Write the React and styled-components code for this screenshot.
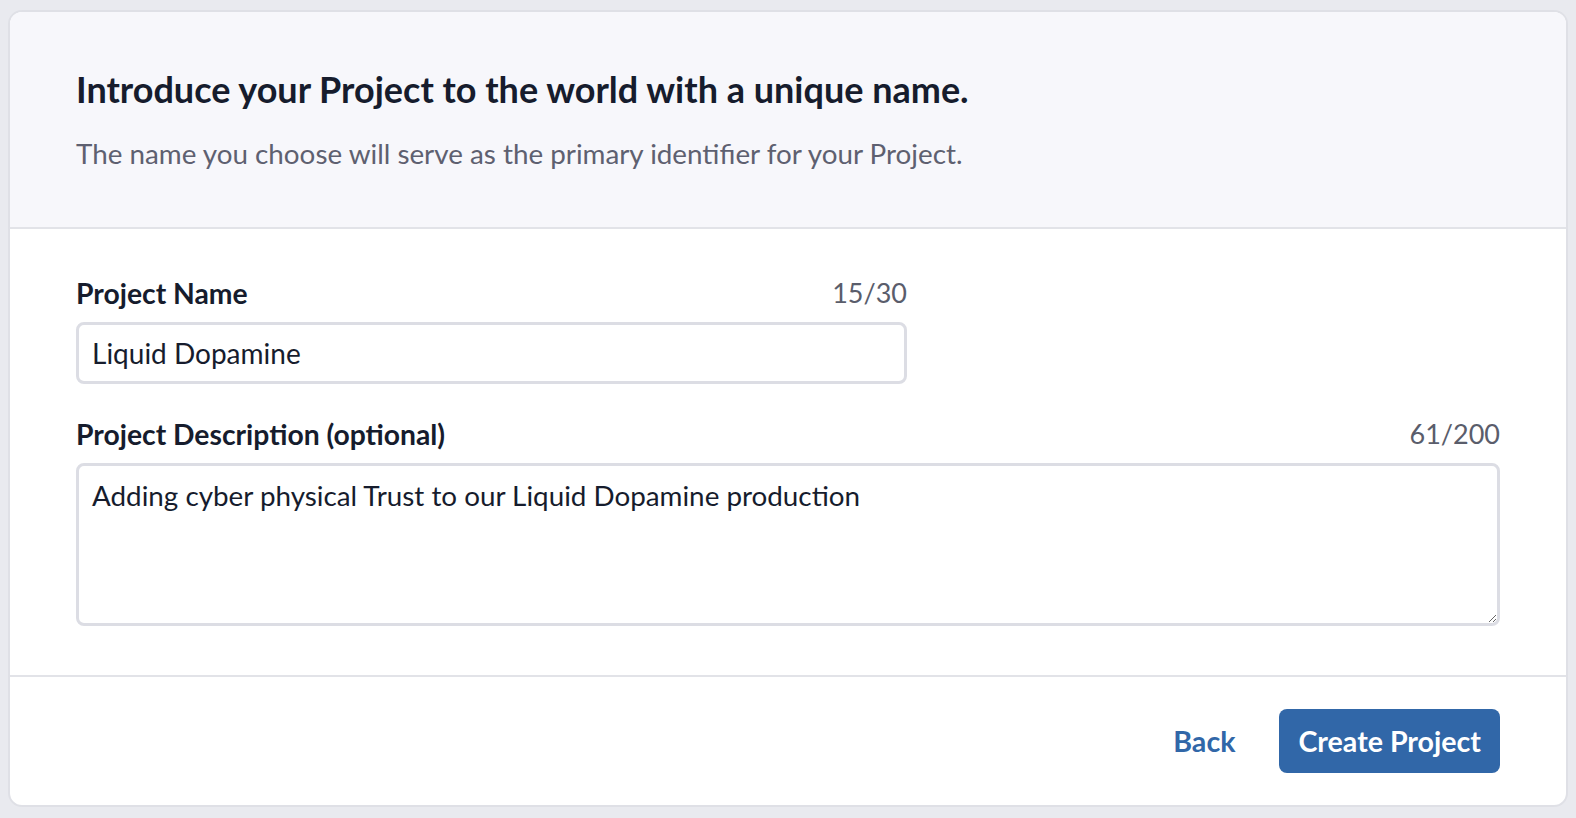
import React, { useState } from 'react';
import styled, { createGlobalStyle } from 'styled-components';

const GlobalStyle = createGlobalStyle`
  html, body {
    margin: 0;
    background: #e9eaef;
  }
  body {
    padding: 10px 8px 10px 8px;
    font-family: Lato, "Open Sans", sans-serif;
  }
`;

const NAME_MAX = 30;
const DESC_MAX = 200;

const App = () => {
  const [name, setName] = useState('Liquid Dopamine');
  const [description, setDescription] = useState(
    'Adding cyber physical Trust to our Liquid Dopamine production'
  );

  return (
    <>
      <GlobalStyle />
      <Card>
        <Header>
          <Title>Introduce your Project to the world with a unique name.</Title>
          <Subtitle>
            The name you choose will serve as the primary identifier for your Project.
          </Subtitle>
        </Header>
        <Body>
          <Field $width="831px">
            <LabelRow>
              <Label htmlFor="project-name">Project Name</Label>
              <Counter>
                {name.length}/{NAME_MAX}
              </Counter>
            </LabelRow>
            <TextInput
              id="project-name"
              value={name}
              maxLength={NAME_MAX}
              onChange={(e) => setName(e.target.value)}
            />
          </Field>
          <Field>
            <LabelRow>
              <Label htmlFor="project-description">Project Description (optional)</Label>
              <Counter>
                {description.length}/{DESC_MAX}
              </Counter>
            </LabelRow>
            <TextArea
              id="project-description"
              value={description}
              maxLength={DESC_MAX}
              onChange={(e) => setDescription(e.target.value)}
            />
          </Field>
        </Body>
        <Footer>
          <LinkButton type="button">Back</LinkButton>
          <PrimaryButton type="button">Create Project</PrimaryButton>
        </Footer>
      </Card>
    </>
  );
};

const Card = styled.div`
  background: #ffffff;
  border: 2px solid #dfe0e6;
  border-radius: 14px;
  overflow: hidden;
  box-sizing: border-box;
  width: 1560px;
`;

const Header = styled.div`
  background: #f7f7fb;
  padding: 55px 66px 54px;
  border-bottom: 2px solid #e2e3e8;
`;

const Title = styled.h1`
  margin: 0;
  font-size: 36px;
  line-height: 44px;
  font-weight: 700;
  color: #161c2d;
`;

const Subtitle = styled.p`
  margin: 24px 0 0;
  font-size: 27.8px;
  line-height: 38px;
  color: #5e6070;
`;

const Body = styled.div`
  padding: 46px 66px 49px;
  display: flex;
  flex-direction: column;
  gap: 32px;
  border-bottom: 2px solid #e2e3e8;
`;

const Field = styled.div`
  display: flex;
  flex-direction: column;
  gap: 11px;
  width: ${({ $width }) => $width || '100%'};
`;

const LabelRow = styled.div`
  display: flex;
  justify-content: space-between;
  align-items: center;
`;

const Label = styled.label`
  font-size: 28.3px;
  line-height: 36px;
  font-weight: 700;
  color: #161c2d;
`;

const Counter = styled.span`
  font-size: 27px;
  line-height: 36px;
  color: #5a5d6b;
`;

const TextInput = styled.input`
  box-sizing: border-box;
  width: 100%;
  height: 62px;
  padding: 0 13px;
  border: 3px solid #dcdde4;
  border-radius: 8px;
  font-family: inherit;
  font-size: 28px;
  color: #161c2d;
  outline: none;
`;

const TextArea = styled.textarea`
  box-sizing: border-box;
  width: 100%;
  height: 163px;
  padding: 11px 13px;
  border: 3px solid #dcdde4;
  border-radius: 8px;
  font-family: inherit;
  font-size: 27.8px;
  line-height: 38px;
  color: #161c2d;
  resize: vertical;
  outline: none;
`;

const Footer = styled.div`
  display: flex;
  justify-content: flex-end;
  align-items: center;
  gap: 44px;
  padding: 32px 66px 32px;
`;

const LinkButton = styled.button`
  background: none;
  border: none;
  padding: 0;
  font-family: inherit;
  font-size: 28.6px;
  font-weight: 700;
  color: #3167a8;
  cursor: pointer;
`;

const PrimaryButton = styled.button`
  height: 64px;
  padding: 0 19px;
  background: #3167a8;
  border: none;
  border-radius: 8px;
  font-family: inherit;
  font-size: 28.6px;
  font-weight: 700;
  color: #ffffff;
  cursor: pointer;
`;

export default App;
